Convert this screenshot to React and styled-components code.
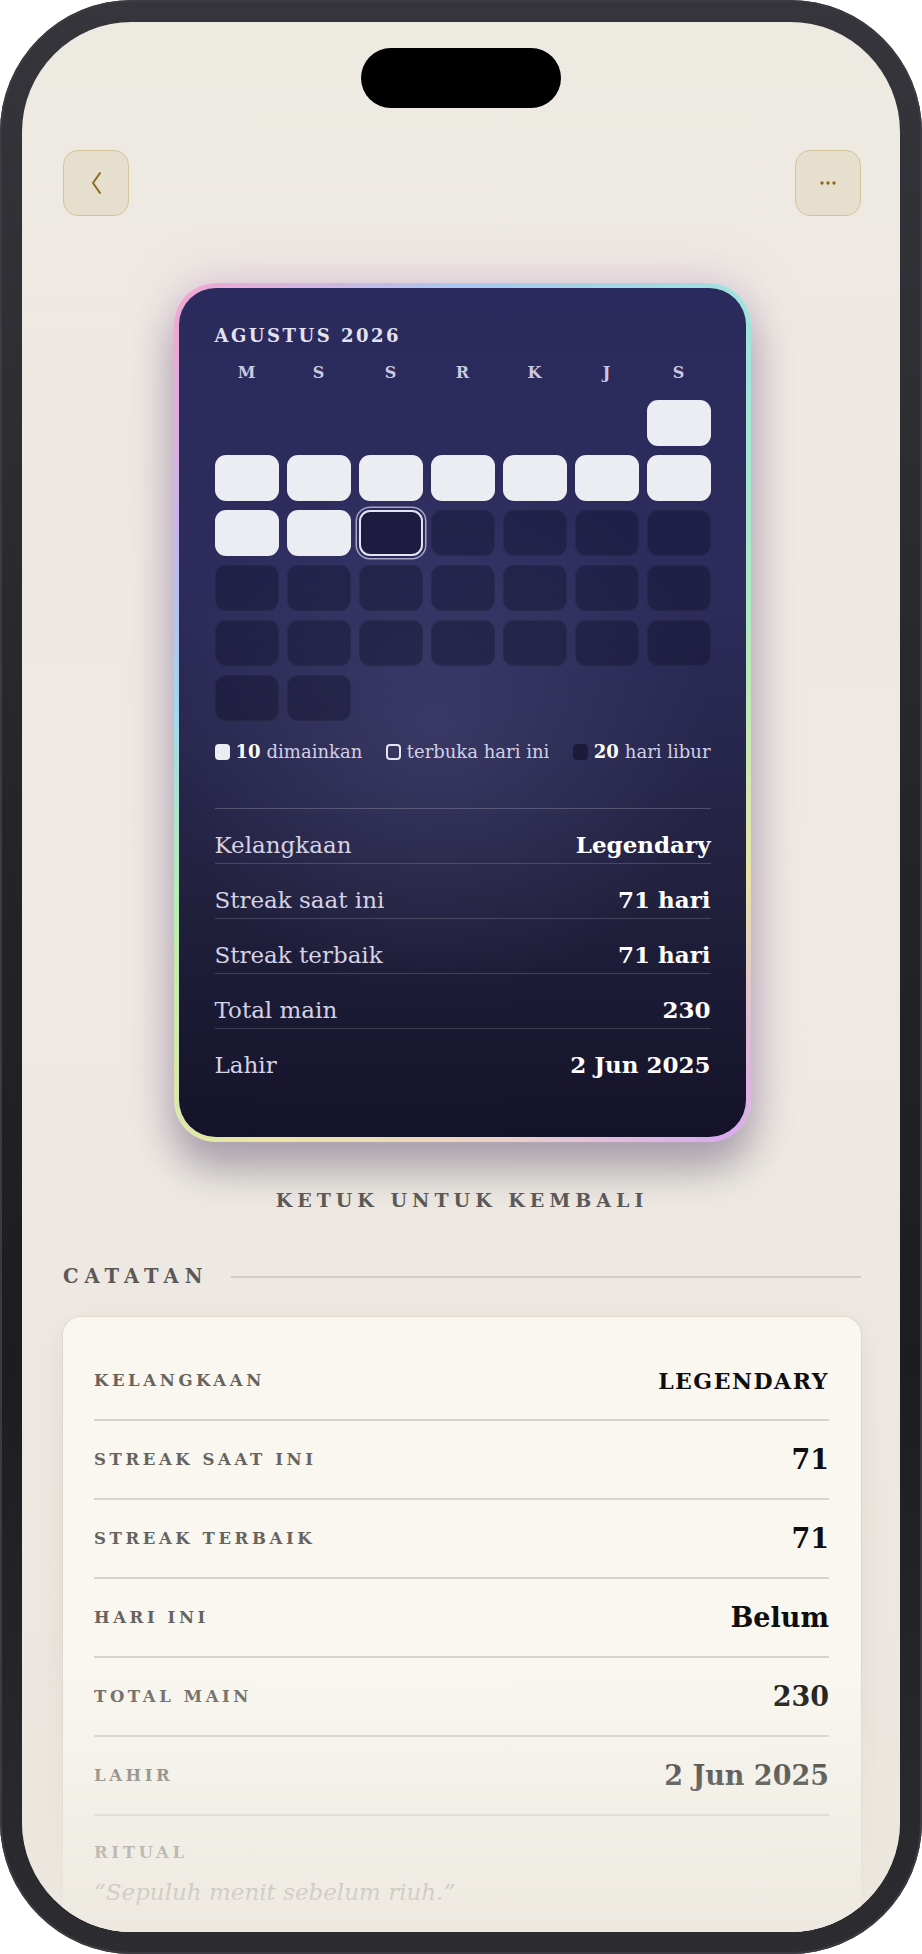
import React from 'react';
import styled, { createGlobalStyle } from 'styled-components';

const GlobalStyle = createGlobalStyle`
  html, body { margin: 0; padding: 0; background: #ffffff; }
  body { font-family: "DejaVu Serif", serif; }
  * { box-sizing: border-box; }
`;

const Phone = styled.div`
  width: 922px;
  height: 1954px;
  border-radius: 132px;
  padding: 22px;
  background: linear-gradient(180deg, #35353b 0%, #242428 45%, #1d1d21 70%, #2c2c31 100%);
  box-shadow: inset 0 0 0 2px #3b3b41;
`;

const Screen = styled.div`
  position: relative;
  height: 100%;
  border-radius: 110px;
  overflow: hidden;
  background: linear-gradient(180deg, #edeae2 0%, #eee9e3 50%, #ebe7df 100%);
`;

const Island = styled.div`
  position: absolute;
  top: 26px;
  left: 50%;
  transform: translateX(-50%);
  width: 200px;
  height: 60px;
  border-radius: 30px;
  background: #000;
`;

const Fade = styled.div`
  position: absolute;
  left: 0;
  right: 0;
  bottom: 0;
  height: 270px;
  pointer-events: none;
  background: linear-gradient(180deg, rgba(236, 232, 224, 0) 0%, rgba(236, 232, 224, 0.93) 100%);
`;

const Content = styled.div`
  display: flex;
  flex-direction: column;
  padding: 128px 39px 0 41px;
`;

const TopBar = styled.div`
  display: flex;
  justify-content: space-between;
  align-items: center;
`;

const IconButton = styled.button`
  width: 66px;
  height: 66px;
  border-radius: 15px;
  border: 1.5px solid #d3c49c;
  background: #e6dfcd;
  display: flex;
  align-items: center;
  justify-content: center;
  padding: 0;
  color: #8b6a1f;
`;

const CardFrame = styled.div`
  align-self: center;
  margin-top: 67px;
  width: 577px;
  padding: 5px;
  border-radius: 42px;
  background: conic-gradient(
    from 0deg at 50% 50%,
    #a9c6f0 0deg,
    #9fe3dc 35deg,
    #b4eab8 80deg,
    #e9e4a6 120deg,
    #d9aaee 148deg,
    #ecd2c6 175deg,
    #ece6a4 205deg,
    #b9ecb2 235deg,
    #a1d8ee 270deg,
    #c3b7ee 300deg,
    #f0a8d2 326deg,
    #a9c6f0 360deg
  );
  box-shadow: 0 -6px 46px rgba(200, 150, 210, 0.35), 0 26px 40px rgba(30, 25, 55, 0.35);
`;

const CardInner = styled.div`
  border-radius: 37px;
  padding: 37px 35px 54px 36px;
  background:
    radial-gradient(ellipse 70% 45% at 45% 52%, rgba(95, 95, 150, 0.32), rgba(95, 95, 150, 0) 70%),
    linear-gradient(180deg, #2a2a5e 0%, #2d2c5c 35%, #22213f 70%, #141329 100%);
`;

const MonthTitle = styled.div`
  font-size: 18px;
  line-height: 22px;
  font-weight: 700;
  letter-spacing: 2.5px;
  color: #e4e2ef;
`;

const WeekRow = styled.div`
  display: grid;
  grid-template-columns: repeat(7, 1fr);
  column-gap: 8px;
  margin-top: 16px;
`;

const WeekDay = styled.div`
  text-align: center;
  font-size: 16px;
  line-height: 19px;
  font-weight: 700;
  color: #cac8e1;
`;

const DayGrid = styled.div`
  display: grid;
  grid-template-columns: repeat(7, 1fr);
  column-gap: 8px;
  row-gap: 9px;
  margin-top: 18px;
`;

const Day = styled.div`
  height: 46px;
  border-radius: 11px;
  ${({ $kind }) =>
    $kind === 'played'
      ? `background: #ececf3;`
      : $kind === 'today'
      ? `background: #1d1c40; border: 2px solid #e4e4f0; box-shadow: 0 0 0 2px #2b2a5c, 0 0 0 3.5px rgba(205, 205, 235, 0.75);`
      : $kind === 'off'
      ? `background: rgba(14, 13, 38, 0.38); box-shadow: inset 0 0 0 1px rgba(255,255,255,0.03);`
      : `background: transparent;`}
`;

const Legend = styled.div`
  display: flex;
  justify-content: space-between;
  align-items: center;
  margin-top: 21px;
  font-size: 18px;
  line-height: 20px;
  color: #d2d0e6;
`;

const LegendItem = styled.div`
  display: flex;
  align-items: center;
  gap: 6px;
`;

const Swatch = styled.span`
  width: 15px;
  height: 16px;
  border-radius: 4px;
  ${({ $kind }) =>
    $kind === 'played'
      ? `background: #ececf3;`
      : $kind === 'today'
      ? `border: 2px solid #e4e4f0;`
      : `background: #1c1b3c;`}
`;

const LegendNum = styled.b`
  color: #ffffff;
  font-weight: 700;
`;

const Stats = styled.div`
  margin-top: 46px;
  border-top: 1px solid rgba(255, 255, 255, 0.2);
`;

const StatRow = styled.div`
  display: flex;
  justify-content: space-between;
  align-items: center;
  padding: 24px 0 6px;
  line-height: 24px;
  border-bottom: 1px solid rgba(255, 255, 255, 0.16);
  &:last-child { border-bottom: none; }
`;

const StatLabel = styled.span`
  font-size: 23px;
  color: #d4d2e4;
`;

const StatValue = styled.span`
  font-size: 23px;
  font-weight: 700;
  color: #ffffff;
`;

const TapHint = styled.div`
  margin-top: 46px;
  text-align: center;
  font-size: 19px;
  line-height: 24px;
  font-weight: 700;
  letter-spacing: 5px;
  color: #5c5857;
`;

const SectionHeader = styled.div`
  margin-top: 53px;
  display: flex;
  align-items: center;
  gap: 22px;
`;

const SectionTitle = styled.div`
  font-size: 19.5px;
  line-height: 24px;
  font-weight: 700;
  letter-spacing: 6px;
  color: #5c5857;
`;

const SectionLine = styled.div`
  flex: 1;
  height: 2px;
  background: #d2cdc6;
`;

const RecordCard = styled.div`
  margin-top: 28px;
  padding: 25px 32px 40px 31px;
  border-radius: 18px;
  background: #f9f7f0;
  box-shadow: 0 10px 30px rgba(60, 45, 30, 0.07), 0 0 0 1px rgba(220, 212, 198, 0.5);
`;

const RecordRow = styled.div`
  display: flex;
  justify-content: space-between;
  align-items: center;
  height: 79px;
  border-bottom: 2px solid #d8d4cd;
`;

const RecordLabel = styled.span`
  font-size: 16.5px;
  font-weight: 700;
  letter-spacing: 3.6px;
  color: #67635f;
`;

const RecordValue = styled.span`
  font-size: ${({ $caps }) => ($caps ? '22px' : '27px')};
  font-weight: 700;
  letter-spacing: ${({ $caps }) => ($caps ? '1.5px' : '0')};
  color: #0e0e0e;
`;

const Ritual = styled.div`
  padding-top: 26px;
`;

const RitualLabel = styled.div`
  font-size: 16.5px;
  line-height: 22px;
  font-weight: 700;
  letter-spacing: 3.6px;
  color: #67635f;
`;

const Quote = styled.div`
  margin-top: 12px;
  font-size: 23px;
  line-height: 32px;
  font-style: italic;
  color: #67635f;
`;

const days = [];
for (let i = 0; i < 6; i++) days.push({ kind: 'empty' });
for (let d = 1; d <= 31; d++) {
  days.push({ kind: d <= 10 ? 'played' : d === 11 ? 'today' : 'off' });
}

const stats = [
  ['Kelangkaan', 'Legendary'],
  ['Streak saat ini', '71 hari'],
  ['Streak terbaik', '71 hari'],
  ['Total main', '230'],
  ['Lahir', '2 Jun 2025'],
];

const records = [
  ['KELANGKAAN', 'LEGENDARY', true],
  ['STREAK SAAT INI', '71'],
  ['STREAK TERBAIK', '71'],
  ['HARI INI', 'Belum'],
  ['TOTAL MAIN', '230'],
  ['LAHIR', '2 Jun 2025'],
];

export default function App() {
  return (
    <>
      <GlobalStyle />
      <Phone>
        <Screen>
          <Island />
          <Content>
            <TopBar>
              <IconButton aria-label="Kembali">
                <svg width="13" height="24" viewBox="0 0 13 24" fill="none">
                  <polyline points="10,2 3,12 10,22" stroke="#8b6a1f" strokeWidth="2" strokeLinecap="round" strokeLinejoin="round" />
                </svg>
              </IconButton>
              <IconButton aria-label="Lainnya">
                <svg width="18" height="6" viewBox="0 0 18 6">
                  <circle cx="3" cy="3" r="1.7" fill="#8b6a1f" />
                  <circle cx="9" cy="3" r="1.7" fill="#8b6a1f" />
                  <circle cx="15" cy="3" r="1.7" fill="#8b6a1f" />
                </svg>
              </IconButton>
            </TopBar>

            <CardFrame>
              <CardInner>
                <MonthTitle>AGUSTUS 2026</MonthTitle>
                <WeekRow>
                  {['M', 'S', 'S', 'R', 'K', 'J', 'S'].map((d, i) => (
                    <WeekDay key={i}>{d}</WeekDay>
                  ))}
                </WeekRow>
                <DayGrid>
                  {days.map((d, i) => (
                    <Day key={i} $kind={d.kind} />
                  ))}
                </DayGrid>
                <Legend>
                  <LegendItem>
                    <Swatch $kind="played" />
                    <LegendNum>10</LegendNum>
                    <span>dimainkan</span>
                  </LegendItem>
                  <LegendItem>
                    <Swatch $kind="today" />
                    <span>terbuka hari ini</span>
                  </LegendItem>
                  <LegendItem>
                    <Swatch $kind="off" />
                    <LegendNum>20</LegendNum>
                    <span>hari libur</span>
                  </LegendItem>
                </Legend>
                <Stats>
                  {stats.map(([l, v]) => (
                    <StatRow key={l}>
                      <StatLabel>{l}</StatLabel>
                      <StatValue>{v}</StatValue>
                    </StatRow>
                  ))}
                </Stats>
              </CardInner>
            </CardFrame>

            <TapHint>KETUK UNTUK KEMBALI</TapHint>

            <SectionHeader>
              <SectionTitle>CATATAN</SectionTitle>
              <SectionLine />
            </SectionHeader>

            <RecordCard>
              {records.map(([l, v, caps]) => (
                <RecordRow key={l}>
                  <RecordLabel>{l}</RecordLabel>
                  <RecordValue $caps={caps}>{v}</RecordValue>
                </RecordRow>
              ))}
              <Ritual>
                <RitualLabel>RITUAL</RitualLabel>
                <Quote>“Sepuluh menit sebelum riuh.”</Quote>
              </Ritual>
            </RecordCard>
          </Content>
          <Fade />
        </Screen>
      </Phone>
    </>
  );
}
